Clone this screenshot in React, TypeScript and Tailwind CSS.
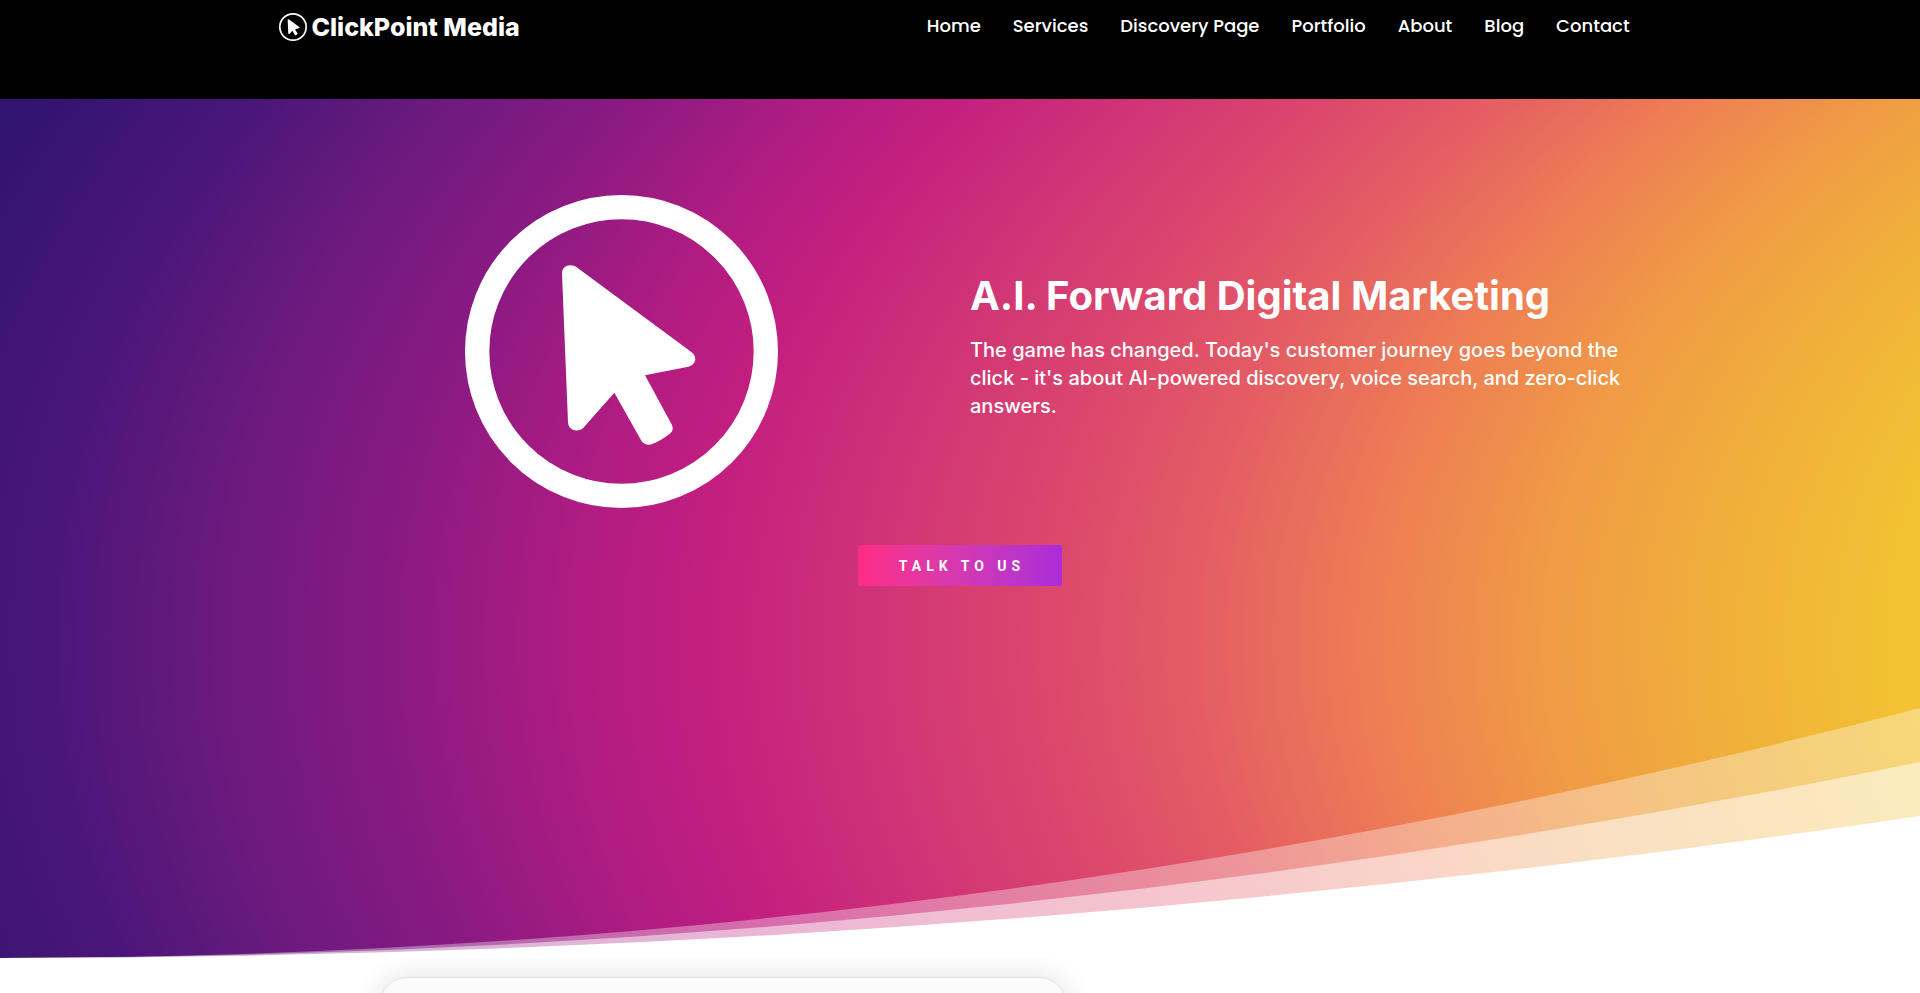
/**
 * ClickPoint Media landing page
 * Header, gradient hero with a curved divider, first content card
 */

const navigation = [
  { name: "Home", href: "#home" },
  { name: "Services", href: "#services" },
  { name: "Discovery Page", href: "#discovery" },
  { name: "Portfolio", href: "#portfolio" },
  { name: "About", href: "#about" },
  { name: "Blog", href: "#blog" },
  { name: "Contact", href: "#contact" },
];

function CursorMark({ className, ring }: { className: string; ring: number }) {
  const r = (939 - ring) / 2;
  return (
    <svg viewBox="78 75 939 939" className={className} fill="none" aria-hidden="true">
      <circle cx="547.5" cy="544.5" r={r} stroke="currentColor" strokeWidth={ring} />
      <path
        fill="currentColor"
        d="M369 312C368 286 395 279 415 293L757 546C777 562 771 584 748 590L618 616L699 765C703 774 702 782 695 789C679 803 660 814 638 823C626 826 615 823 608 814L526 668L436 770C420 790 388 783 387 757Z"
      />
    </svg>
  );
}

function Header() {
  return (
    <header className="bg-black text-white">
      <div className="mx-auto w-[71%] h-[99px] flex items-start justify-between pl-px pr-3">
        <a href="#home" className="flex items-center gap-1 pt-[13px]">
          <CursorMark className="size-7" ring={56} />
          <span className="font-['Inter',sans-serif] text-[25px] leading-7 font-extrabold">ClickPoint Media</span>
        </a>
        <nav className="flex items-center gap-8 pt-3 font-['Poppins','Inter',sans-serif] text-lg leading-7 font-medium">
          {navigation.map((item) => (
            <a key={item.name} href={item.href} className="whitespace-nowrap hover:text-white/70">
              {item.name}
            </a>
          ))}
        </nav>
      </div>
    </header>
  );
}

/* Three stacked curves, the last one solid white */
function HeroDivider() {
  return (
    <svg
      viewBox="0 0 1920 250"
      preserveAspectRatio="none"
      className="absolute inset-x-0 bottom-0 w-full h-[250px] text-white"
      fill="currentColor"
      aria-hidden="true"
    >
      <path d="M0 250Q960 250 1920 0V250Z" fillOpacity="0.35" />
      <path d="M0 250Q960 250 1920 54V250Z" fillOpacity="0.5" />
      <path d="M0 250Q960 250 1920 108V250Z" />
    </svg>
  );
}

function Hero() {
  return (
    <section className="relative pt-24 pb-93 text-white font-['Inter',sans-serif] bg-[radial-gradient(ellipse_230%_206%_at_230%_63%,#f3c832_55%,#f3c233_57%,#f0b03a_61%,#f09b45_65%,#ee7d54_69%,#e45c64_73%,#da436e_77%,#d13576_80%,#c41f7f_84%,#b01c82_87%,#8a1a82_91%,#6c1a7e_95%,#4a1679_99%,#31146f_104%)]">
      <div className="mx-auto w-[70%] grid grid-cols-2 gap-3 items-center">
        <div className="flex justify-center">
          <CursorMark className="size-[313px]" ring={73} />
        </div>
        <div className="pb-2 pl-1">
          <h1 className="text-[40px] leading-10 font-bold mb-5">A.I. Forward Digital Marketing</h1>
          <p className="text-xl leading-7 font-medium">
            The game has changed. Today's customer journey goes beyond the click - it's about AI-powered discovery,
            voice search, and zero-click answers.
          </p>
        </div>
      </div>
      <div className="mt-[37px] flex justify-center">
        <button className="h-[41px] w-51 pl-1 rounded-[3px] bg-linear-to-r from-[#ff2c85] to-[#ab2bd9] font-['Roboto',sans-serif] text-sm font-bold uppercase tracking-[5px]">
          Talk to us
        </button>
      </div>
      <HeroDivider />
    </section>
  );
}

export default function App() {
  return (
    <div className="h-screen overflow-hidden bg-white">
      <Header />
      <Hero />
      <main className="mx-auto w-[60.5%] pt-[19px]">
        <div className="w-[688px] h-80 rounded-[28px] border border-[#e2e2e2] bg-[#fbfbfb] shadow-[0_0_30px_rgba(0,0,0,0.12)]" />
      </main>
    </div>
  );
}
